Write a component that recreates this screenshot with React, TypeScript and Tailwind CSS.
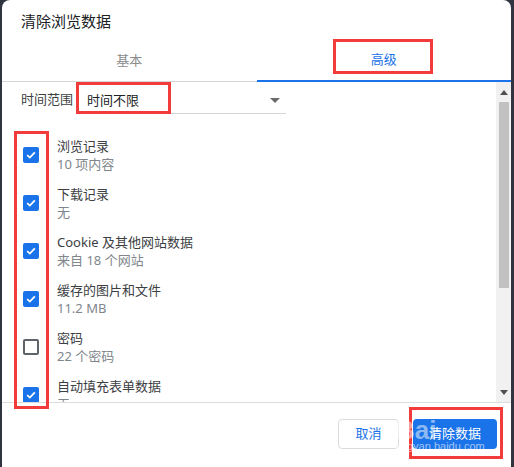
import React from "react";

const font = { fontFamily: '"Noto Sans", "Noto Sans CJK SC", sans-serif' };

function Check({ on }: { on: boolean }) {
  if (on)
    return (
      <div className="w-4 h-4 rounded-[2px] bg-[#1a73e8] flex items-center justify-center shrink-0">
        <svg width="12" height="12" viewBox="0 0 12 12">
          <path d="M2.2 6.2 L4.8 8.6 L9.8 3.4" fill="none" stroke="white" strokeWidth="1.8" />
        </svg>
      </div>
    );
  return <div className="w-4 h-4 rounded-[2px] border-2 border-[#5f6368] shrink-0" />;
}

const items: [string, string, boolean][] = [
  ["浏览记录", "10 项内容", true],
  ["下载记录", "无", true],
  ["Cookie 及其他网站数据", "来自 18 个网站", true],
  ["缓存的图片和文件", "11.2 MB", true],
  ["密码", "22 个密码", false],
  ["自动填充表单数据", "无", true],
];

export default function App() {
  return (
    <div className="w-[514px] h-[467px] bg-[#2f3440] overflow-hidden relative pl-[2px] pr-[3px]" style={font}>
      <div className="w-full h-[480px] bg-white rounded-[8px] flex flex-col">
        <div className="h-[40px] pl-[19px] pt-[10px] text-[15px] text-[#202124] leading-[22px]">清除浏览数据</div>
        <div className="flex h-[42px]">
          <div className="flex-1 flex items-center justify-center text-[13px] text-[#8a8a8a] border-b border-[#d6d6d6]">基本</div>
          <div className="flex-1 flex items-center justify-center text-[13px] text-[#1a73e8] border-b-2 border-[#1a73e8]">高级</div>
        </div>
        <div className="h-[321px] flex border-b border-[#dcdcdc]">
          <div className="flex-1 overflow-hidden">
            <div className="flex items-center h-[32px] pl-[19px] mt-[2px]">
              <span className="text-[13px] text-[#3c4043] w-[64px]">时间范围</span>
              <div className="w-[201px] h-[26px] border-b border-[#d6d6d6] flex items-center justify-between pl-[2px] pr-[6px] mt-[2px]">
                <span className="text-[13px] text-[#202124]">时间不限</span>
                <svg width="10" height="6" viewBox="0 0 10 6"><path d="M0 0 L10 0 L5 5 Z" fill="#6b6b6b" /></svg>
              </div>
            </div>
            <div className="pt-[15px]">
              {items.map(([a, b, on]) => (
                <div key={a} className="flex items-center h-[48px] pl-[21px]">
                  <Check on={on} />
                  <div className="pl-[18px] flex flex-col">
                    <span className="text-[13px] leading-[18px] text-[#3c4043]">{a}</span>
                    <span className="text-[13px] leading-[18px] text-[#80868b]">{b}</span>
                  </div>
                </div>
              ))}
            </div>
          </div>
          <div className="w-[15px] bg-[#f1f1f1] flex flex-col items-center">
            <div className="h-[20px] flex items-center justify-center">
              <svg width="8" height="5" viewBox="0 0 8 5"><path d="M0 5 L4 0 L8 5 Z" fill="#505050" /></svg>
            </div>
            <div className="w-[10px] h-[186px] bg-[#c1c1c1]" />
            <div className="flex-1" />
            <div className="h-[20px] flex items-center justify-center">
              <svg width="8" height="5" viewBox="0 0 8 5"><path d="M0 0 L8 0 L4 5 Z" fill="#505050" /></svg>
            </div>
          </div>
        </div>
        <div className="flex justify-end gap-[14px] pr-[14px] pt-[16px]">
          <button className="w-[61px] h-[30px] rounded-[4px] border border-[#dadce0] text-[13px] text-[#1a73e8] bg-white">取消</button>
          <button className="w-[84px] h-[30px] rounded-[4px] bg-[#1a73e8] text-[13px] text-white">清除数据</button>
        </div>
      </div>
      {/* annotation boxes */}
      <div className="absolute left-[333px] top-[39px] w-[100px] h-[35px] border-[3px] border-[#f23b3b]" />
      <div className="absolute left-[76px] top-[82px] w-[95px] h-[32px] border-[3px] border-[#f23b3b]" />
      <div className="absolute left-[14px] top-[131px] w-[35px] h-[278px] border-[3px] border-[#f23b3b]" />
      <div className="absolute left-[409px] top-[407px] w-[94px] h-[52px] border-[3px] border-[#f23b3b]" />
      {/* watermark */}
      <div className="absolute left-[396px] top-[417px] text-[26px] font-bold text-white/50 leading-none" style={{ fontFamily: '"Liberation Sans", sans-serif' }}>Bai</div>
      <div className="absolute left-[396px] top-[441px] text-[11px] text-white/60 leading-none" style={{ fontFamily: '"Liberation Sans", sans-serif' }}>jingyan.baidu.com</div>
    </div>
  );
}
